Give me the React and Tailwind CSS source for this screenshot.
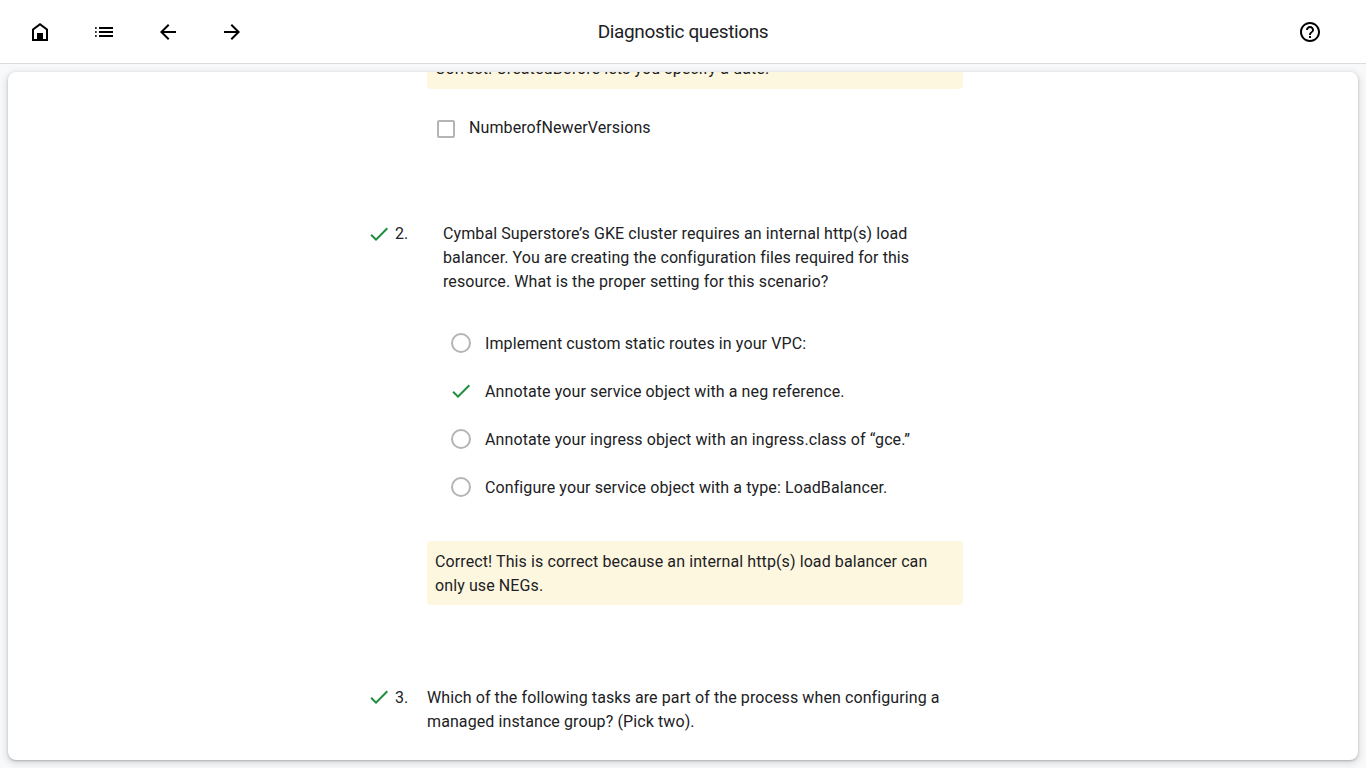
const ICONS = {
  home: "M12 3L4 9v12h16V9l-8-6zm6 16h-3v-6H9v6H6v-9l6-4.5 6 4.5v9z",
  list: "M3.2 13h1.4v-2H3.2v2zm0 4h1.4v-2H3.2v2zm0-8h1.4V7H3.2v2zM7 13h14v-2H7v2zm0 4h14v-2H7v2zM7 7v2h14V7H7z",
  back: "M20 11H7.83l5.59-5.59L12 4l-8 8 8 8 1.41-1.41L7.83 13H20v-2z",
  forward: "M12 4l-1.41 1.41L16.17 11H4v2h12.17l-5.58 5.59L12 20l8-8-8-8z",
  help: "M11 18h2v-2h-2v2zm1-16C6.48 2 2 6.48 2 12s4.48 10 10 10 10-4.48 10-10S17.52 2 12 2zm0 18c-4.41 0-8-3.59-8-8s3.59-8 8-8 8 3.59 8 8-3.59 8-8 8zm0-14c-2.21 0-4 1.79-4 4h2c0-1.1.9-2 2-2s2 .9 2 2c0 2-3 1.75-3 5h2c0-2.25 3-2.5 3-5 0-2.21-1.79-4-4-4z",
  check: "M9 16.2L4.8 12l-1.4 1.4L9 19 21 7l-1.4-1.4L9 16.2z",
};

function Icon({ name, className = "" }) {
  return (
    <svg viewBox="0 0 24 24" fill="currentColor" className={"size-6 shrink-0 " + className}>
      <path d={ICONS[name]} />
    </svg>
  );
}

function IconButton({ name, label }) {
  return (
    <button aria-label={label} className="flex size-12 items-center justify-center text-black">
      <Icon name={name} />
    </button>
  );
}

function Feedback({ className = "py-2", children }) {
  return <div className={"rounded bg-[#fef7e0] px-2 " + className}>{children}</div>;
}

function QuestionHead({ number, indent = "", iconClass = "", children }) {
  return (
    <div className="-ml-[60px] flex">
      <Icon name="check" className={"text-[#1e8e3e] " + iconClass} />
      <span className="ml-1 w-8">{number}.</span>
      <p className={"flex-1 whitespace-nowrap " + indent}>{children}</p>
    </div>
  );
}

function Option({ correct, children }) {
  return (
    <label className="flex h-12 items-center">
      <span className="mr-3 flex size-6 items-center justify-center">
        {correct ? (
          <Icon name="check" className="text-[#1e8e3e]" />
        ) : (
          <span className="size-5 rounded-full border-2 border-[#b5b5b5]" />
        )}
      </span>
      <span className="pt-0.5">{children}</span>
    </label>
  );
}

export default function App() {
  return (
    <div className="flex h-screen flex-col overflow-hidden bg-[#f8f9fa] font-['Roboto',sans-serif] text-base leading-6 tracking-[0.1px] text-[#202124]">
      <header className="grid h-16 shrink-0 grid-cols-[1fr_auto_1fr] items-center border-b border-[#dadce0] bg-white px-4">
        <nav className="flex gap-4">
          <IconButton name="home" label="Home" />
          <IconButton name="list" label="Outline" />
          <IconButton name="back" label="Previous" />
          <IconButton name="forward" label="Next" />
        </nav>
        <h1 className="text-[19px] leading-6 tracking-[-0.36px]">Diagnostic questions</h1>
        <div className="mr-4 flex justify-end">
          <IconButton name="help" label="Help" />
        </div>
      </header>

      <main className="m-2 min-h-0 flex-1 overflow-hidden rounded-lg bg-white shadow-[0_1px_2px_0_rgba(60,64,67,0.3),0_2px_6px_2px_rgba(60,64,67,0.15)]">
        <div className="-mt-[23px] ml-[419px] w-[536px]">
          <Feedback>Correct! CreatedBefore lets you specify a date.</Feedback>

          <label className="mt-[27px] flex pl-[10px]">
            <span className="mt-1 mr-[14px] size-[18px] rounded-xs border-2 border-[#b5b5b5]" />
            NumberofNewerVersions
          </label>

          <section className="mt-[82px]">
            <QuestionHead number={2} indent="pl-4">
              Cymbal Superstore’s GKE cluster requires an internal http(s) load
              <br />
              balancer. You are creating the configuration files required for this
              <br />
              resource. What is the proper setting for this scenario?
            </QuestionHead>
            <div className="mt-[25px] mb-[30px] pl-[22px]">
              <Option>Implement custom static routes in your VPC:</Option>
              <Option correct>Annotate your service object with a neg reference.</Option>
              <Option>Annotate your ingress object with an ingress.class of “gce.”</Option>
              <Option>Configure your service object with a type: LoadBalancer.</Option>
            </div>
            <Feedback className="pt-[9px] pb-[7px]">
              Correct! This is correct because an internal http(s) load balancer can
              <br />
              only use NEGs.
            </Feedback>
          </section>

          <section className="mt-[81px]">
            <QuestionHead number={3} iconClass="-mt-px">
              Which of the following tasks are part of the process when configuring a
              <br />
              managed instance group? (Pick two).
            </QuestionHead>
          </section>
        </div>
      </main>
    </div>
  );
}
